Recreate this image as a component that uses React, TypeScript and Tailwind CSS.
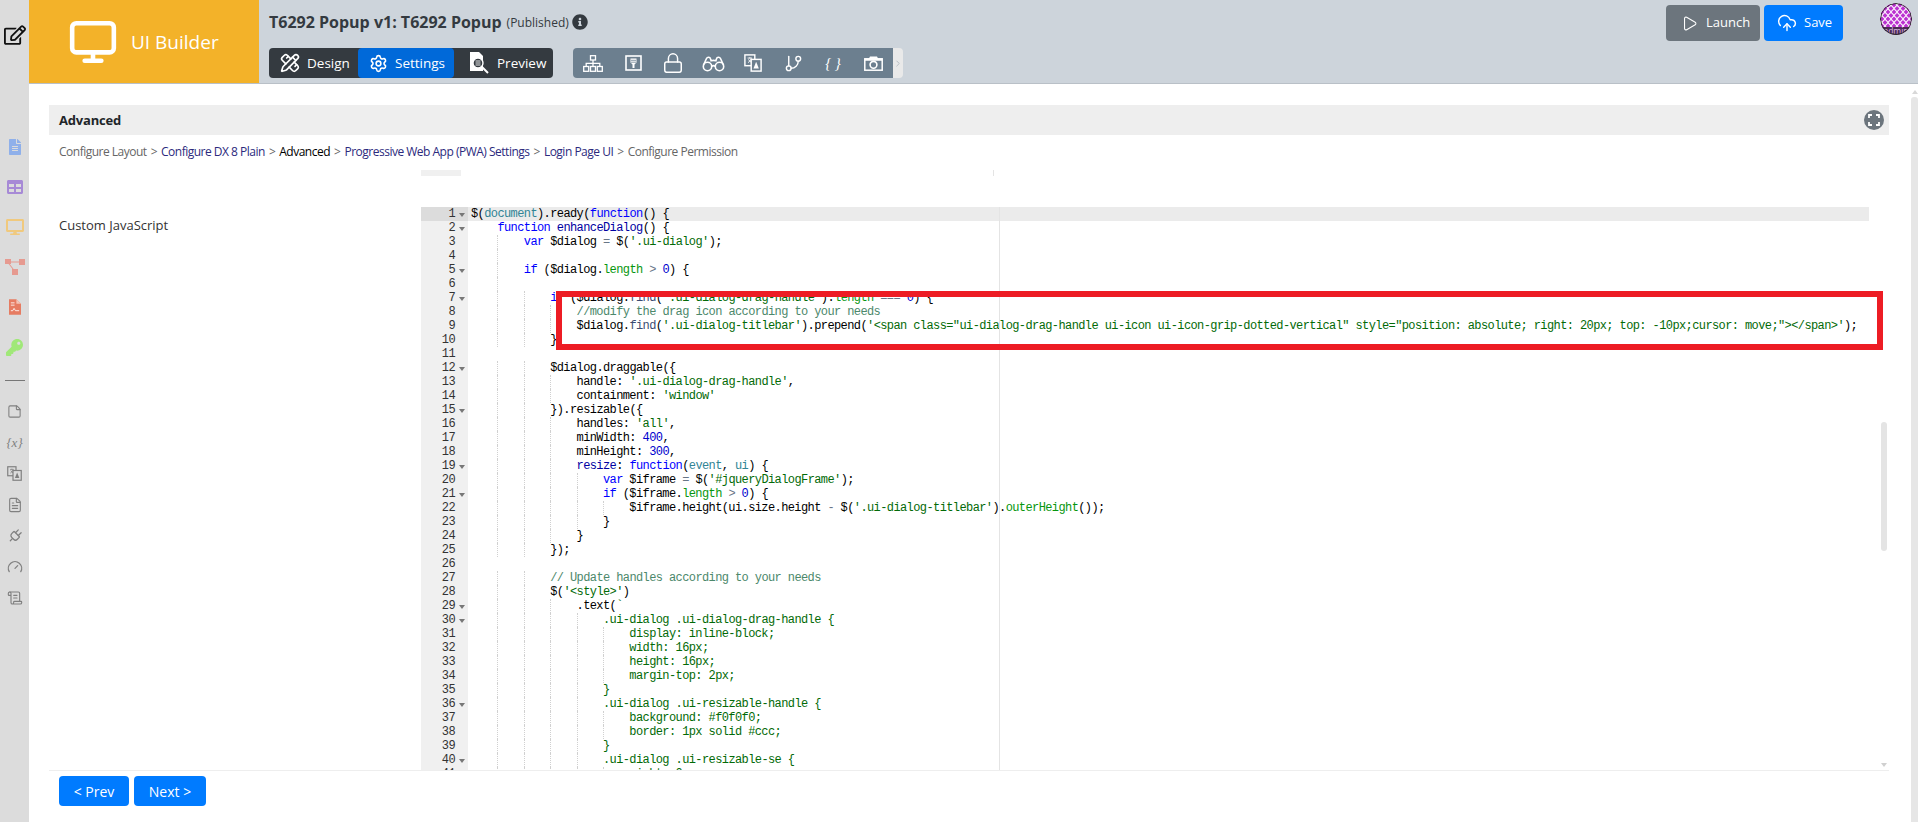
import { ChevronRight, CloudUpload, FileText, Gauge, GitBranch, Lock, Monitor, PencilRuler, Play, Plug, ScrollText, Settings, StickyNote } from "lucide-react";
import { FaDesktop, FaFileAlt, FaInfoCircle, FaKey, FaRegEdit, FaTable } from "react-icons/fa";

type Tok = [string, string?];
type Line = { n: number; indent: number; fold?: boolean; toks: Tok[] };

const colors: Record<string, string> = {
  kw: "text-[#0000ff]",
  fn: "text-[#0000a2]",
  sup: "text-[#318495]",
  str: "text-[#036a07]",
  com: "text-[#4c886b]",
  num: "text-[#0000cd]",
  len: "text-[#06960e]",
  dom: "text-[#3c4c72]",
  op: "text-[#687687]",
};

const lines: Line[] = [
  { n: 1, indent: 0, fold: true, toks: [["$("], ["document", "sup"], [").ready("], ["function", "kw"], ["() {"]] },
  { n: 2, indent: 4, fold: true, toks: [["function", "kw"], [" "], ["enhanceDialog", "fn"], ["() {"]] },
  { n: 3, indent: 8, toks: [["var", "kw"], [" $dialog "], ["=", "op"], [" $("], ["'.ui-dialog'", "str"], [");"]] },
  { n: 4, indent: 8, toks: [] },
  { n: 5, indent: 8, fold: true, toks: [["if", "kw"], [" ($dialog."], ["length", "len"], [" "], [">", "op"], [" "], ["0", "num"], [") {"]] },
  { n: 6, indent: 8, toks: [] },
  { n: 7, indent: 12, fold: true, toks: [["if", "kw"], [" ($dialog."], ["find", "dom"], ["("], ["'.ui-dialog-drag-handle'", "str"], [")."], ["length", "len"], [" "], ["===", "op"], [" "], ["0", "num"], [") {"]] },
  { n: 8, indent: 16, toks: [["//modify the drag icon according to your needs", "com"]] },
  { n: 9, indent: 16, toks: [["$dialog."], ["find", "dom"], ["("], ["'.ui-dialog-titlebar'", "str"], [").prepend("], ["'<span class=\"ui-dialog-drag-handle ui-icon ui-icon-grip-dotted-vertical\" style=\"position: absolute; right: 20px; top: -10px;cursor: move;\"></span>'", "str"], [");"]] },
  { n: 10, indent: 12, toks: [["}"]] },
  { n: 11, indent: 0, toks: [] },
  { n: 12, indent: 12, fold: true, toks: [["$dialog.draggable({"]] },
  { n: 13, indent: 16, toks: [["handle: "], ["'.ui-dialog-drag-handle'", "str"], [","]] },
  { n: 14, indent: 16, toks: [["containment: "], ["'window'", "str"]] },
  { n: 15, indent: 12, fold: true, toks: [["}).resizable({"]] },
  { n: 16, indent: 16, toks: [["handles: "], ["'all'", "str"], [","]] },
  { n: 17, indent: 16, toks: [["minWidth: "], ["400", "num"], [","]] },
  { n: 18, indent: 16, toks: [["minHeight: "], ["300", "num"], [","]] },
  { n: 19, indent: 16, fold: true, toks: [["resize", "fn"], [": "], ["function", "kw"], ["("], ["event", "sup"], [", "], ["ui", "sup"], [") {"]] },
  { n: 20, indent: 20, toks: [["var", "kw"], [" $iframe "], ["=", "op"], [" $("], ["'#jqueryDialogFrame'", "str"], [");"]] },
  { n: 21, indent: 20, fold: true, toks: [["if", "kw"], [" ($iframe."], ["length", "len"], [" "], [">", "op"], [" "], ["0", "num"], [") {"]] },
  { n: 22, indent: 24, toks: [["$iframe.height(ui.size.height "], ["-", "op"], [" $("], ["'.ui-dialog-titlebar'", "str"], [")."], ["outerHeight", "len"], ["());"]] },
  { n: 23, indent: 20, toks: [["}"]] },
  { n: 24, indent: 16, toks: [["}"]] },
  { n: 25, indent: 12, toks: [["});"]] },
  { n: 26, indent: 0, toks: [] },
  { n: 27, indent: 12, toks: [["// Update handles according to your needs", "com"]] },
  { n: 28, indent: 12, toks: [["$("], ["'<style>'", "str"], [")"]] },
  { n: 29, indent: 16, fold: true, toks: [[".text("], ["`", "str"]] },
  { n: 30, indent: 20, fold: true, toks: [[".ui-dialog .ui-dialog-drag-handle {", "str"]] },
  { n: 31, indent: 24, toks: [["display: inline-block;", "str"]] },
  { n: 32, indent: 24, toks: [["width: 16px;", "str"]] },
  { n: 33, indent: 24, toks: [["height: 16px;", "str"]] },
  { n: 34, indent: 24, toks: [["margin-top: 2px;", "str"]] },
  { n: 35, indent: 20, toks: [["}", "str"]] },
  { n: 36, indent: 20, fold: true, toks: [[".ui-dialog .ui-resizable-handle {", "str"]] },
  { n: 37, indent: 24, toks: [["background: #f0f0f0;", "str"]] },
  { n: 38, indent: 24, toks: [["border: 1px solid #ccc;", "str"]] },
  { n: 39, indent: 20, toks: [["}", "str"]] },
  { n: 40, indent: 20, fold: true, toks: [[".ui-dialog .ui-resizable-se {", "str"]] },
  { n: 41, indent: 24, toks: [["right: 0;", "str"]] },
];

function CodeLine({ line }: { line: Line }) {
  const groups = Math.floor(line.indent / 4);
  return (
    <div className={line.n === 1 ? "flex h-[14px] bg-[#ebebeb] pl-[3px]" : "flex h-[14px] pl-[3px]"}>
      {Array.from({ length: groups }).map((_, i) => (
        <span key={i} className={i === 0 ? "h-[14px] w-[26.4px] shrink-0" : "h-[14px] w-[26.4px] shrink-0 border-l border-dotted border-[#d0d0d0]"} />
      ))}
      <span className="whitespace-pre">
        {line.toks.map((t, i) => (
          <span key={i} className={t[1] ? colors[t[1]] : "text-black"}>{t[0]}</span>
        ))}
      </span>
    </div>
  );
}

function Translate({ size = 18, main = "#fff", ink = "#6c7f8f" }: { size?: number; main?: string; ink?: string }) {
  return (
    <svg width={size} height={size} viewBox="0 0 20 20" fill="none">
      <rect x="1" y="1" width="11" height="12" fill={ink} stroke={main} strokeWidth="1.6" />
      <path d="M4 4.500h5M6.500 3.500v1.500M8 5c-.5 2-1.800 3.600-3.500 4.500M5 6c.8 1.600 2 2.800 3.500 3.500" stroke={main} strokeWidth="1" />
      <rect x="8" y="6" width="11" height="13" fill={ink} stroke={main} strokeWidth="1.6" />
      <path d="M13.500 8.500l3 7.500h-6z" fill={main} />
    </svg>
  );
}

function FormIcon() {
  return (
    <svg width="17" height="16" viewBox="0 0 17 16" fill="none">
      <rect x="1" y="1" width="15" height="14" stroke="#fff" strokeWidth="1.6" />
      <path d="M5.500 3.500h6v4l-2 2v3.500h-2V9.500l-2-2z" fill="#fff" />
      <path d="M6 5.300h5M6 7.200h5" stroke="#6c7f8f" strokeWidth="0.8" />
    </svg>
  );
}

function SitemapIcon() {
  return (
    <svg width="20" height="17" viewBox="0 0 20 17" fill="none" stroke="#fff" strokeWidth="1.300">
      <rect x="7.500" y="0.700" width="5" height="4.300" />
      <rect x="0.700" y="11.500" width="5" height="4.800" />
      <rect x="7.500" y="11.500" width="5" height="4.800" />
      <rect x="14.300" y="11.500" width="5" height="4.800" />
      <path d="M10 5v6.500M3.200 11.500V8.300h13.600v3.200" />
    </svg>
  );
}

function BinocularsIcon() {
  return (
    <svg width="23" height="17" viewBox="0 0 23 17" fill="none" stroke="#fff" strokeWidth="1.600">
      <circle cx="5.500" cy="11.500" r="4.200" />
      <circle cx="17.500" cy="11.500" r="4.200" />
      <path d="M9.700 11.500c1-.9 2.600-.9 3.600 0M1.500 10l3-6.500c.8-1.700 3.500-1.700 4 .3l.6 2c1.500-.5 3.300-.5 4.800 0l.6-2c.5-2 3.200-2 4 -.3l3 6.500" />
    </svg>
  );
}

function CameraIcon() {
  return (
    <svg width="19" height="15" viewBox="0 0 19 15" fill="none">
      <rect x="0.800" y="2.800" width="17.400" height="11.400" stroke="#fff" strokeWidth="1.500" />
      <path d="M0.800 2.800h4l1.200-2.300h7l1.200 2.300h4v2H0.800z" fill="#fff" />
      <circle cx="9.500" cy="8.800" r="3.400" stroke="#fff" strokeWidth="1.600" />
    </svg>
  );
}

function PreviewIcon() {
  return (
    <svg width="21" height="24" viewBox="0 0 21 24" fill="none">
      <path d="M1 1h9l4 4v15H1z" fill="#fff" />
      <circle cx="9" cy="12" r="5" fill="#343a40" stroke="#fff" strokeWidth="1.400" />
      <path d="M6.500 10h5M6.500 12h5M6.500 14h5" stroke="#fff" strokeWidth="0.900" />
      <path d="M13 16l6 6" stroke="#fff" strokeWidth="2" />
    </svg>
  );
}

function Tree() {
  return (
    <svg width="20" height="16" viewBox="0 0 20 16" fill="#e69a90">
      <rect x="0" y="0" width="6" height="5" />
      <rect x="14" y="0" width="6" height="6" />
      <rect x="7" y="10" width="6" height="6" />
      <path d="M5 2.500h10v1H5zM4 4l5 6.500-.8.6-5-6.500z" />
    </svg>
  );
}

function PdfFile() {
  return (
    <svg width="12" height="16" viewBox="0 0 13 17">
      <path d="M0 0h8l5 5v12H0z" fill="#e67c62" />
      <path d="M8 0l5 5H8z" fill="#f4c3b6" />
      <path d="M2 4h4M2 6.500h4" stroke="#fff" strokeWidth="0.9" />
      <path d="M2 12.500h2l1.500-2.500 1.500 2.500h4" stroke="#fff" strokeWidth="0.9" fill="none" />
    </svg>
  );
}

function Avatar() {
  const dots: number[][] = [];
  for (let row = 0; row < 7; row++) {
    for (let col = 0; col < 6; col++) dots.push([2 + col * 6 + (row % 2 ? 3 : 0), 2 + row * 3.500]);
  }
  return (
    <svg width="32" height="32" viewBox="0 0 32 32" className="rounded-full">
      <rect width="32" height="32" fill="#fbf4fc" />
      {dots.map(([x, y], i) => (
        <rect key={i} x={x - 1.700} y={y - 1.700} width="3.400" height="3.400" transform={`rotate(45 ${x} ${y})`} fill="#bb30d0" />
      ))}
      <rect y="24" width="32" height="8" fill="#4d2a55" />
      <text x="16" y="30.500" textAnchor="middle" fontSize="8.500" fill="#d9b8e2" fontFamily="Open Sans">admin</text>
      <circle cx="16" cy="16" r="15.500" fill="none" stroke="#2b2b2b" strokeWidth="1" />
    </svg>
  );
}

function Expand() {
  return (
    <svg width="20" height="20" viewBox="0 0 20 20">
      <circle cx="10" cy="10" r="10" fill="#6c757d" />
      <path d="M5 8V5h3M12 5h3v3M15 12v3h-3M8 15H5v-3" fill="none" stroke="#fff" strokeWidth="1.800" />
    </svg>
  );
}

function Sidebar() {
  return (
    <aside className="flex h-full w-[29px] shrink-0 flex-col items-center bg-[#dcdcdc]">
      <FaRegEdit size={22} className="mt-[24px] ml-[1px] text-[#111]" />
      <div className="mt-[81px] flex h-[40px] items-center"><FaFileAlt size={16} className="text-[#8fb0ea]" /></div>
      <div className="flex h-[40px] items-center"><FaTable size={16} className="text-[#a78ad6]" /></div>
      <div className="flex h-[40px] items-center"><FaDesktop size={18} className="text-[#f0c97e]" /></div>
      <div className="flex h-[40px] items-center"><Tree /></div>
      <div className="flex h-[40px] items-center"><PdfFile /></div>
      <div className="flex h-[40px] items-center"><FaKey size={17} className="text-[#a0e878]" /></div>
      <div className="mt-[13px] h-px w-[20px] bg-[#777]" />
      <div className="mt-[15px] flex h-[31px] items-center"><StickyNote size={15} strokeWidth={1.700} className="text-[#808080]" /></div>
      <div className="flex h-[31px] items-center font-['Liberation_Serif'] text-[13px] text-[#808080] italic">{"{x}"}</div>
      <div className="flex h-[31px] items-center"><Translate size={15} main="#808080" ink="#dcdcdc" /></div>
      <div className="flex h-[31px] items-center"><FileText size={16} strokeWidth={1.700} className="text-[#808080]" /></div>
      <div className="flex h-[31px] items-center"><Plug size={16} strokeWidth={1.900} className="rotate-45 text-[#808080]" /></div>
      <div className="flex h-[31px] items-center"><Gauge size={16} strokeWidth={1.900} className="text-[#808080]" /></div>
      <div className="flex h-[31px] items-center"><ScrollText size={16} strokeWidth={1.700} className="text-[#808080]" /></div>
    </aside>
  );
}

function TopBar() {
  return (
    <header className="flex h-[84px] shrink-0 border-b border-[#b9c0c7] bg-[#cdd4db]">
      <div className="flex w-[230px] shrink-0 items-center bg-[#f3b229] pl-[39px] text-white">
        <Monitor size={50} strokeWidth={2.200} />
        <span className="mt-[2px] ml-[13px] text-[19px]">UI Builder</span>
      </div>
      <div className="pl-[10px]">
        <div className="flex h-[36px] items-end pb-[3px] text-[#343a40]">
          <span className="text-[16px] leading-[22px] font-bold">T6292 Popup v1: T6292 Popup</span>
          <span className="ml-[5px] text-[12px] leading-[20px]">(Published)</span>
          <FaInfoCircle size={16} className="mb-[3px] ml-[3px]" />
        </div>
        <div className="mt-[12px] flex items-start">
          <div className="flex h-[30px] w-[284px] overflow-hidden rounded-[4px] bg-[#343a40] text-[13.500px] text-white">
            <div className="flex w-[89px] items-center pl-[11px]">
              <PencilRuler size={20} />
              <span className="ml-[7px]">Design</span>
            </div>
            <div className="flex w-[96px] items-center rounded-[4px] bg-[#0069d9] pl-[11px]">
              <Settings size={19} />
              <span className="ml-[7px]">Settings</span>
            </div>
            <div className="flex flex-1 items-center pl-[15px]">
              <PreviewIcon />
              <span className="ml-[7px]">Preview</span>
            </div>
          </div>
          <div className="ml-[20px] flex h-[30px] overflow-hidden rounded-[4px]">
            <div className="flex bg-[#6c7f8f] text-white">
              <div className="flex w-[40px] items-center justify-center"><SitemapIcon /></div>
              <div className="flex w-[40px] items-center justify-center"><FormIcon /></div>
              <div className="flex w-[40px] items-center justify-center"><Lock size={22} strokeWidth={1.600} /></div>
              <div className="flex w-[40px] items-center justify-center"><BinocularsIcon /></div>
              <div className="flex w-[40px] items-center justify-center"><Translate /></div>
              <div className="flex w-[40px] items-center justify-center"><GitBranch size={19} strokeWidth={1.800} /></div>
              <div className="flex w-[40px] items-center justify-center font-['Liberation_Serif'] text-[15px] italic">{"{ }"}</div>
              <div className="flex w-[40px] items-center justify-center"><CameraIcon /></div>
            </div>
            <div className="flex w-[10px] items-center justify-center bg-[#e9e9e9] text-[#adb5bd]"><ChevronRight size={11} /></div>
          </div>
        </div>
      </div>
      <div className="ml-auto flex items-start pt-[5px] pr-[6px] text-[13px] text-white">
        <button className="flex h-[36px] w-[94px] items-center rounded-[4px] bg-[#6c757d] pl-[15px]">
          <Play size={17} strokeWidth={1.500} />
          <span className="ml-[8px]">Launch</span>
        </button>
        <button className="ml-[4px] flex h-[36px] w-[79px] items-center rounded-[4px] bg-[#007bff] pl-[13px]">
          <CloudUpload size={20} strokeWidth={1.700} />
          <span className="ml-[7px]">Save</span>
        </button>
        <div className="-mt-[2px] ml-[37px]"><Avatar /></div>
      </div>
    </header>
  );
}

function Editor() {
  return (
    <div className="relative h-[563px] flex-1 overflow-hidden font-['Liberation_Mono'] text-[12px] leading-[14px] tracking-[-0.6px]">
      <div className="flex">
        <div className="w-[47px] shrink-0 bg-[#f0f0f0] text-[#333]">
          {lines.map((l) => (
            <div key={l.n} className={l.n === 1 ? "flex h-[14px] items-center justify-end bg-[#dcdcdc]" : "flex h-[14px] items-center justify-end"}>
              <span>{l.n}</span>
              <span className="flex w-[13px] justify-center">
                {l.fold && <span className="mt-[1px] h-0 w-0 border-x-[3px] border-t-[4px] border-x-transparent border-t-[#777]" />}
              </span>
            </div>
          ))}
        </div>
        <div className="min-w-0 flex-1 pr-[20px]">
          {lines.map((l) => <CodeLine key={l.n} line={l} />)}
        </div>
      </div>
      {/* print margin */}
      <div className="absolute top-0 bottom-0 left-[578px] w-px bg-[#e4e4e4]" />
      {/* red annotation box */}
      <div className="absolute top-[84px] left-[135px] h-[59px] w-[1327px] border-[6px] border-[#ed1c24]" />
      <div className="absolute top-[215px] right-[2px] h-[129px] w-[6px] rounded-[3px] bg-[#e4e4e4]" />
      <div className="absolute top-[556px] right-[2px] h-0 w-0 border-x-[3px] border-t-[4px] border-x-transparent border-t-[#d0d0d0]" />
    </div>
  );
}

export default function App() {
  return (
    <div className="flex h-screen overflow-hidden bg-white font-['Open_Sans',sans-serif]">
      <Sidebar />
      <div className="flex min-w-0 flex-1 flex-col">
        <TopBar />
        <div className="flex min-h-0 flex-1">
          <main className="min-w-0 flex-1 pt-[21px] pr-[22px] pl-[20px]">
            <div className="flex h-[30px] items-center justify-between bg-[#eeeeee] pr-[5px] pl-[10px]">
              <span className="pt-[2px] text-[13px] font-bold tracking-[-0.2px] text-[#212529]">Advanced</span>
              <Expand />
            </div>
            <div className="flex h-[32px] items-center gap-[4px] pt-[1px] pl-[10px] text-[12px] tracking-[-0.5px] text-[#666]">
              <span>Configure Layout</span><span>&gt;</span>
              <span className="font-medium text-[#2c2a7d]">Configure DX 8 Plain</span><span>&gt;</span>
              <span className="font-medium text-black">Advanced</span><span>&gt;</span>
              <span className="font-medium text-[#2c2a7d]">Progressive Web App (PWA) Settings</span><span>&gt;</span>
              <span className="font-medium text-[#2c2a7d]">Login Page UI</span><span>&gt;</span>
              <span>Configure Permission</span>
            </div>
            <div className="mt-[3px] flex h-[6px] pl-[372px]">
              <div className="w-[40px] bg-[#f0f0f0]" />
              <div className="ml-[532px] w-px bg-[#e4e4e4]" />
            </div>
            <div className="mt-[31px] flex">
              <div className="w-[372px] shrink-0 pt-[9px] pl-[10px] text-[13px] text-[#333]">Custom JavaScript</div>
              <Editor />
            </div>
            <div className="flex gap-[5px] border-t border-[#eeeeee] pt-[5px] pl-[10px] text-[14px] text-white">
              <button className="h-[30px] w-[70px] rounded-[4px] bg-[#007bff]">&lt; Prev</button>
              <button className="h-[30px] w-[72px] rounded-[4px] bg-[#007bff]">Next &gt;</button>
            </div>
          </main>
          <div className="flex w-[7px] shrink-0 flex-col items-center">
            <div className="mt-[6px] h-0 w-0 border-x-[3px] border-b-[4px] border-x-transparent border-b-[#d8d8d8]" />
            <div className="mt-[3px] w-full flex-1 rounded-t-[3px] bg-[#e6e6e6]" />
          </div>
        </div>
      </div>
    </div>
  );
}
